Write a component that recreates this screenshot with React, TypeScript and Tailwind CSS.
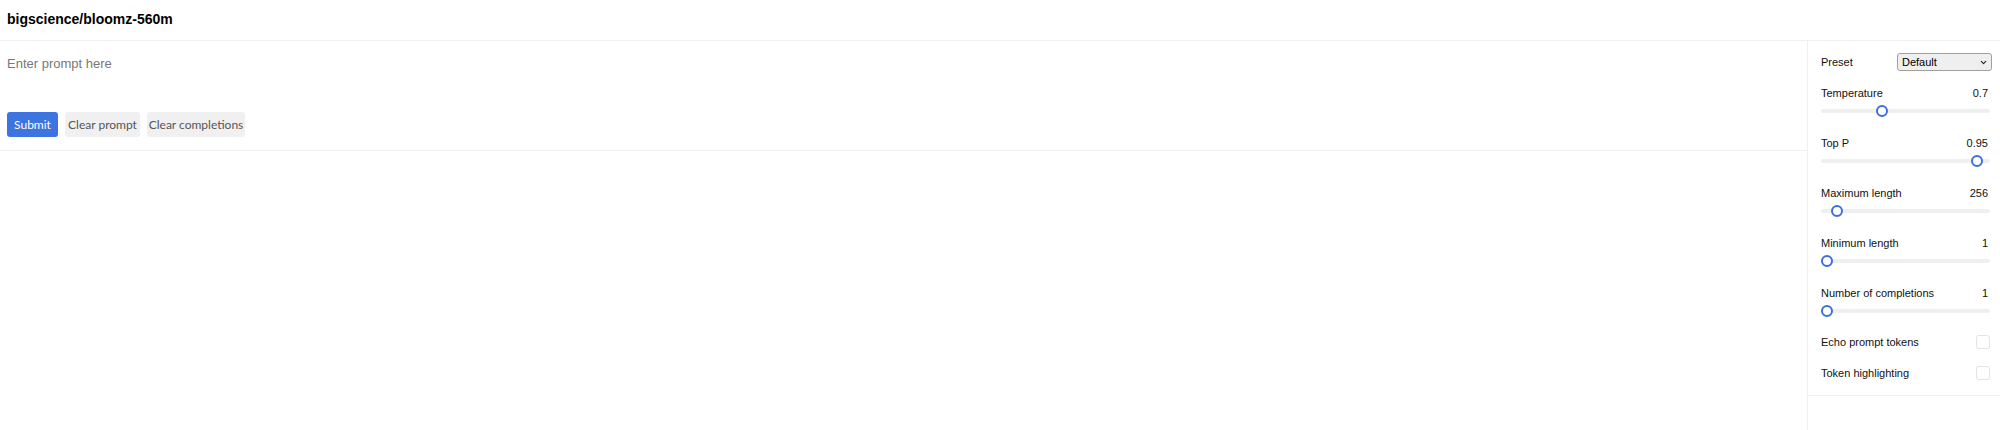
import { ChevronDown } from "lucide-react";

type SliderProps = {
  label: string;
  value: string;
  pos: number;
};

const Slider = ({ label, value, pos }: SliderProps) => {
  return (
    <div className="flex flex-col h-[50px]">
      <div className="flex justify-between items-center h-[14px] text-[11px] text-[#111] pr-[2px]">
        <span>{label}</span>
        <span>{value}</span>
      </div>
      <div className="relative h-[12px] mt-[5px] flex items-center">
        <div className="w-full h-[4px] rounded-full bg-[#efefef]" />
        <div
          className="absolute top-0 w-[12px] h-[12px] rounded-full border-2 border-[#3a6fe0] bg-white"
          style={{ left: `calc(${pos * 100}% - ${pos * 12}px)` }}
        />
      </div>
    </div>
  );
};

const Check = ({ label }: { label: string }) => {
  return (
    <div className="flex justify-between items-center h-[14px] text-[11px] text-[#111]">
      <span>{label}</span>
      <div className="w-[14px] h-[14px] rounded-[3px] border border-[#e3e3e3] bg-white" />
    </div>
  );
};

export default function App() {
  return (
    <div className="w-full h-[430px] flex flex-col bg-white font-['Liberation_Sans',Arial,sans-serif]">
      <div className="h-[41px] shrink-0 border-b border-[#efefef] px-[7px] flex items-center pb-[2px]">
        <h1 className="text-[14px] font-bold text-black">bigscience/bloomz-560m</h1>
      </div>

      <div className="flex flex-1">
        <div className="flex-1 flex flex-col">
          <div className="border-b border-[#efefef] pt-[15px] pb-[13px] px-[7px]">
            <textarea
              placeholder="Enter prompt here"
              className="w-full h-[56px] block resize-none outline-none text-[13px] leading-[15px] text-[#333] placeholder:text-[#777]"
            />
            <div className="flex gap-[7px] h-[25px] font-['Lato',sans-serif] text-[12px]">
              <button className="w-[51px] rounded-[3px] bg-[#3d74e0] text-white">Submit</button>
              <button className="w-[75px] rounded-[3px] bg-[#f0f0f0] text-[#555]">Clear prompt</button>
              <button className="w-[98px] rounded-[3px] bg-[#f0f0f0] text-[#555]">Clear completions</button>
            </div>
          </div>
        </div>

        <div className="w-[193px] shrink-0 border-l border-[#efefef]">
          <div className="border-b border-[#efefef] pl-[13px] pr-[8px] pt-[12px] pb-[15px] flex flex-col">
            <div className="flex justify-between items-center h-[18px] text-[11px] text-[#111]">
              <span>Preset</span>
              <div className="relative w-[95px] h-[18px]">
                <select className="appearance-none w-full h-full rounded-[3px] border border-[#a0a0a0] bg-[#efefef] pl-[4px] text-[11px] text-black outline-none">
                  <option>Default</option>
                </select>
                <ChevronDown
                  className="absolute right-[4px] top-[5px] w-[9px] h-[9px] text-[#222] pointer-events-none"
                  strokeWidth={3}
                />
              </div>
            </div>
            <div className="mt-[15px] pr-[2px]">
              <Slider label="Temperature" value="0.7" pos={0.35} />
              <Slider label="Top P" value="0.95" pos={0.955} />
              <Slider label="Maximum length" value="256" pos={0.0625} />
              <Slider label="Minimum length" value="1" pos={0} />
              <div className="h-[32px]">
                <Slider label="Number of completions" value="1" pos={0} />
              </div>
            </div>
            <div className="mt-[17px] flex flex-col gap-[17px] pr-[2px]">
              <Check label="Echo prompt tokens" />
              <Check label="Token highlighting" />
            </div>
          </div>
        </div>
      </div>
    </div>
  );
}
